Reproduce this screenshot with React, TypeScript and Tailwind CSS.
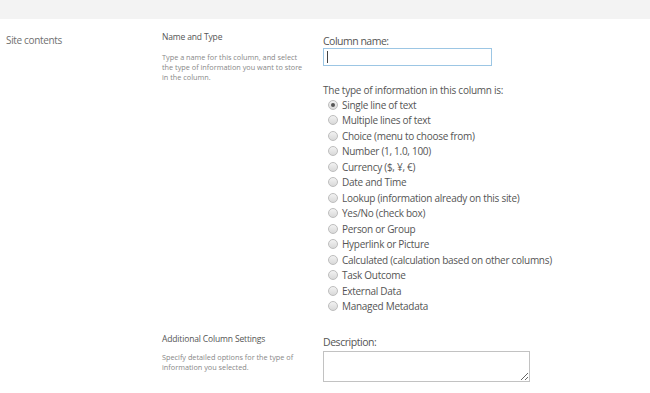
import React from "react";

const types = [
  "Single line of text",
  "Multiple lines of text",
  "Choice (menu to choose from)",
  "Number (1, 1.0, 100)",
  "Currency ($, ¥, €)",
  "Date and Time",
  "Lookup (information already on this site)",
  "Yes/No (check box)",
  "Person or Group",
  "Hyperlink or Picture",
  "Calculated (calculation based on other columns)",
  "Task Outcome",
  "External Data",
  "Managed Metadata",
];

function Radio({ checked }: { checked?: boolean }) {
  return (
    <span className="relative inline-flex h-[10px] w-[10px] shrink-0 items-center justify-center rounded-full border border-[#bdbdbd] bg-gradient-to-b from-[#f2f2f2] to-[#d9d9d9]">
      {checked && <span className="h-[4px] w-[4px] rounded-full bg-[#555]" />}
    </span>
  );
}

export default function App() {
  return (
    <div
      className="h-[393px] w-[650px] overflow-hidden bg-white text-[#555]"
      style={{ fontFamily: '"Open Sans", "Noto Sans", sans-serif' }}
    >
      <div className="h-[19px] bg-[#f3f3f3]" />
      <div className="flex pt-[12px]">
        <div className="w-[162px] shrink-0 pl-[6px] pt-[2px]">
          <div className="text-[10px] leading-[14px] tracking-[-0.35px] text-[#707070]">Site contents</div>
        </div>
        <div className="flex flex-col">
          <div className="flex">
            <div className="w-[161px] shrink-0">
              <div className="text-[8.5px] leading-[12px] tracking-[-0.15px] text-[#555]">Name and Type</div>
              <div className="mt-[9px] w-[146px] text-[7.3px] leading-[10px] text-[#888]">
                Type a name for this column, and select the type of information you want to store in the column.
              </div>
            </div>
            <div className="pt-[3px]">
              <div className="text-[10.5px] leading-[14px] tracking-[-0.5px] text-[#555]">Column name:</div>
              <div className="flex h-[18px] w-[169px] items-center border border-[#9cc6e4] bg-white pl-[3px]">
                <span className="h-[12px] w-px bg-[#444]" />
              </div>
              <div className="mt-[17px] text-[10px] leading-[14px] tracking-[-0.25px] text-[#555]">
                The type of information in this column is:
              </div>
              <div className="flex flex-col">
                {types.map((t, i) => (
                  <div key={t} className="flex h-[15.5px] items-center gap-[4px] pl-[5px]">
                    <Radio checked={i === 0} />
                    <span className="text-[10px] leading-[14px] tracking-[-0.28px] text-[#555]">{t}</span>
                  </div>
                ))}
              </div>
            </div>
          </div>
          <div className="mt-[19px] flex">
            <div className="w-[161px] shrink-0">
              <div className="text-[8.5px] leading-[12px] tracking-[-0.15px] text-[#555]">Additional Column Settings</div>
              <div className="mt-[7px] w-[150px] text-[7.3px] leading-[10px] text-[#888]">
                Specify detailed options for the type of information you selected.
              </div>
            </div>
            <div className="pt-[2px]">
              <div className="text-[10.5px] leading-[14px] tracking-[-0.45px] text-[#555]">Description:</div>
              <textarea
                className="mt-[2px] block h-[31px] w-[207px] resize border border-[#c2c2c2] bg-white outline-none"
                readOnly
              />
            </div>
          </div>
        </div>
      </div>
    </div>
  );
}
